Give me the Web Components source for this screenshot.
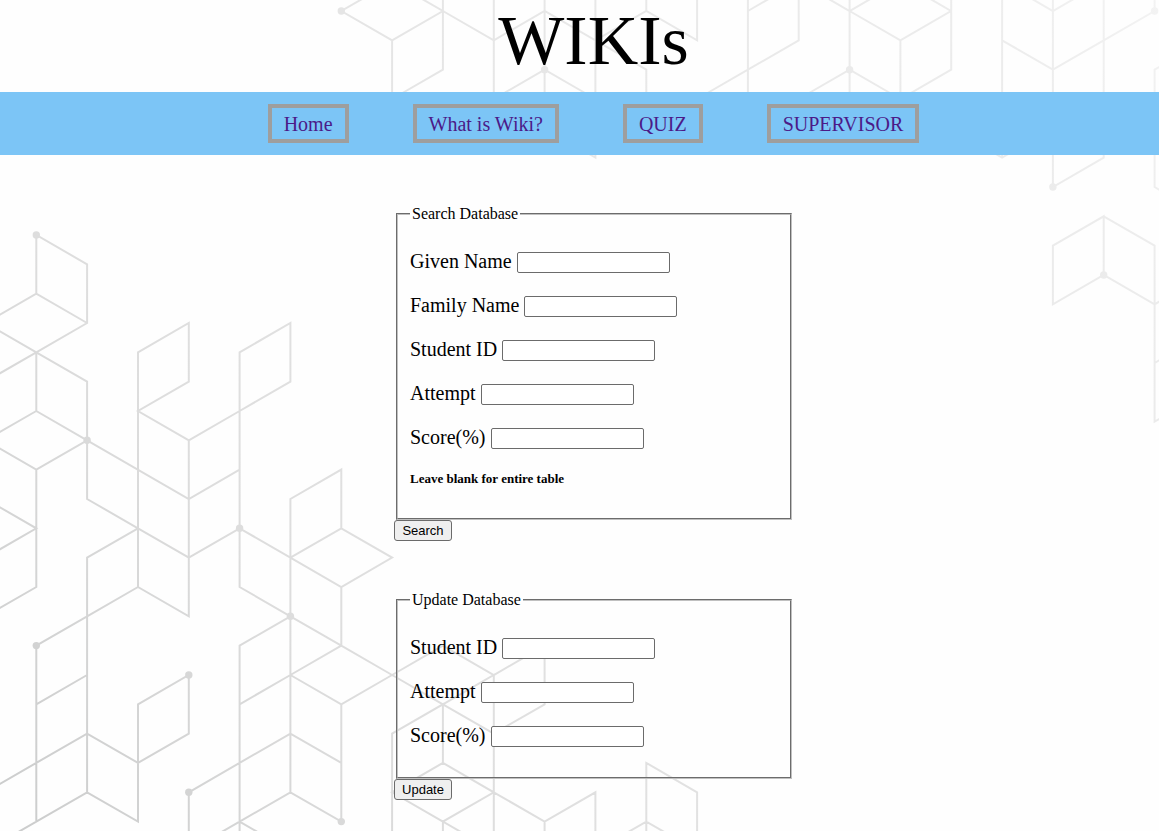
<!DOCTYPE html>
<html lang="en">
<head>
<meta charset="utf-8">
<title>WIKIs - Supervisor</title>
<style>
  body { margin: 0; background: #fefefe; font-family: "Liberation Serif", "Times New Roman", serif; color: #000; }
</style>
</head>
<body>
<wiki-page>
  <wiki-nav slot="nav">
    <nav-item href="#home">Home</nav-item>
    <nav-item href="#wiki">What is Wiki?</nav-item>
    <nav-item href="#quiz">QUIZ</nav-item>
    <nav-item href="#supervisor">SUPERVISOR</nav-item>
  </wiki-nav>
  <db-form legend="Search Database" action-label="Search">
    <field-row label="Given Name" name="given"></field-row>
    <field-row label="Family Name" name="family"></field-row>
    <field-row label="Student ID" name="id"></field-row>
    <field-row label="Attempt" name="attempt"></field-row>
    <field-row label="Score(%)" name="score"></field-row>
    <form-note>Leave blank for entire table</form-note>
  </db-form>
  <db-form legend="Update Database" action-label="Update">
    <field-row label="Student ID" name="id"></field-row>
    <field-row label="Attempt" name="attempt"></field-row>
    <field-row label="Score(%)" name="score"></field-row>
  </db-form>
</wiki-page>
<script>
class BaseElement extends HTMLElement {
  connectedCallback() {
    if (!this.shadowRoot) this.attachShadow({ mode: "open" }).innerHTML = this.render();
  }
}

/* Isometric line pattern. Each point is "column,row" on a triangular lattice. */
const LATTICE = {
  lower: { top: 235, dots: "0,0 1,7 4,10 0,14 5,13 3,15 3,19 6,20", lines: `
    0,2 0,0 1,1 1,3 0,4 -1,5|-1,3 0,2 1,3|-1,3 0,4 1,5 1,9 2,10 3,11 3,13 2,12 2,4 3,3 3,5 2,6 3,7 3,11
    0,4 0,6 1,7 3,9 4,8|-1,7 0,6|-1,7 0,8 1,7|0,8 0,12 -1,13|-1,9 0,10 -1,11
    3,7 4,6 5,5 5,3 4,4 4,12 5,13|3,11 4,10 5,11 6,12 7,11 6,10 5,11|5,19 5,9 6,8 6,10|6,12 6,14
    2,10 1,11 1,19|2,12 1,13 0,14 0,20|0,16 1,15|-1,19 0,18 1,17 2,18|-1,21 0,20 1,19 2,20 2,16 3,15 3,17 2,18
    3,22 3,19 4,18 5,17 6,18|5,13 4,14 4,22|5,13 6,14 7,15 8,16 9,17|4,16 5,15 6,14|5,15 6,16 7,15 8,14
    6,16 6,20 5,19 4,20 2,22|4,20 6,22|7,22 7,17 8,16 8,18 7,19 8,20 8,22|8,18 9,19 8,20 9,21
    8,14 9,15 10,14 10,16 9,17|8,16 9,15 9,22|9,19 10,20 11,19 11,22|10,20 10,22
    12,22 12,18 13,19 13,22|11,21 12,20 13,21` },
  upper: { top: 11, dots: "6,0 10,2 16,2 22,0 20,6 21,9", lines: `
    7,3 7,1 6,0 7,-1 8,0 7,1|8,-1 8,2 7,3|8,0 9,1 10,0 11,1 12,0 13,1 13,-1|9,-1 9,4|10,-1 10,4|9,3 10,2 11,3
    11,-1 11,5 10,4|12,-1 12,0|11,1 12,2 12,4|14,-1 14,4|14,0 15,-1 15,1 14,2 13,3|16,-1 16,4|15,-1 16,0 17,-1
    16,0 17,1 18,0 18,2 17,3 17,1|15,3 16,2 17,3|17,-1 18,0 18,-1|19,-1 19,5|18,4 19,5 20,4|19,-1 20,0 21,-1
    19,1 20,2 21,1 22,0 22,-1|20,-1 20,2|20,4 20,6 21,5 21,-1|23,1 22,2 22,6 23,7
    20,2 20,4|21,9 21,7 20,8 20,10 21,9 22,10 23,9|21,7 22,8 22,14 23,13|22,12 23,11` }
};

class CubePattern extends BaseElement {
  render() {
    const groups = Object.values(LATTICE).map(g => {
      const at = p => {
        const [c, r] = p.split(",").map(Number);
        return [(36.3 + c * 50.83).toFixed(1), (g.top + r * 29.33).toFixed(1)];
      };
      const d = g.lines.trim().split(/\||\n/).map(l => "M" + l.trim().split(/\s+/).map(at).join("L")).join("");
      const dots = g.dots.split(" ").map(at).map(([x, y]) => `<circle cx="${x}" cy="${y}" r="3.7" fill="url(#fade)"/>`).join("");
      return `<path d="${d}" fill="none" stroke="url(#fade)" stroke-width="2"/>${dots}`;
    }).join("");
    return `<style>
      :host { position: absolute; inset: 0; overflow: hidden; z-index: -1; }
      svg { display: block; width: 100%; height: 100%; }
    </style>
    <svg aria-hidden="true"><defs>
      <linearGradient id="fade" gradientUnits="userSpaceOnUse" x1="0" y1="831" x2="1159" y2="0">
        <stop offset="0" stop-color="#cbcccc"/><stop offset=".26" stop-color="#dddddd"/>
        <stop offset=".53" stop-color="#e5e5e5"/><stop offset=".88" stop-color="#ececec"/>
        <stop offset="1" stop-color="#f3f3f3"/>
      </linearGradient></defs>${groups}</svg>`;
  }
}

class WikiPage extends BaseElement {
  render() {
    return `<style>
      :host { display: block; position: relative; z-index: 0; min-height: 100vh; }
      h1 { margin: 0; padding-left: 28px; height: 92px; font-size: 70px; line-height: 82px; font-weight: 400; text-align: center; }
      main { display: flex; flex-direction: column; align-items: center; gap: 50px; padding: 50px 0 30px 29px; }
    </style>
    <cube-pattern></cube-pattern>
    <header><h1>WIKIs</h1><slot name="nav"></slot></header>
    <main><slot></slot></main>`;
  }
}

class WikiNav extends BaseElement {
  render() {
    return `<style>
      :host { display: block; background: #7cc5f6; }
      nav { display: flex; justify-content: center; gap: 64px; padding: 12px 0 12px 28px; }
    </style><nav><slot></slot></nav>`;
  }
}

class NavItem extends BaseElement {
  render() {
    return `<style>
      :host { display: block; }
      a { display: block; border: 4px solid #9e9e9e; padding: 5px 12px 3px; font-size: 20px; line-height: 23px; color: #4b1a88; text-decoration: none; white-space: nowrap; }
    </style><a href="${this.getAttribute("href")}"><slot></slot></a>`;
  }
}

class DbForm extends BaseElement {
  render() {
    return `<style>
      :host { display: block; width: 400px; max-width: 100%; }
      form { display: flex; flex-direction: column; align-items: flex-start; }
      fieldset { align-self: stretch; min-width: 0; margin: 0 2px; border: 2px groove #c0c0c0; padding: 25px 12px 31px; }
      legend { padding: 0 2px; font-size: 16px; line-height: 18px; }
      .rows { display: flex; flex-direction: column; gap: 20px; }
      button { box-sizing: border-box; width: 58px; height: 21px; padding: 0; border: 1px solid #6b6b6b; border-radius: 3px; background: #efefef; color: #000; font: 13px/19px "Liberation Sans", Arial, sans-serif; }
    </style>
    <form><fieldset><legend>${this.getAttribute("legend")}</legend><div class="rows"><slot></slot></div></fieldset>
    <button type="button">${this.getAttribute("action-label")}</button></form>`;
  }
}

class FieldRow extends BaseElement {
  render() {
    return `<style>
      :host { display: flex; align-items: center; gap: 5px; height: 24px; font-size: 20px; line-height: 24px; }
      label { padding-top: 2px; }
      input { box-sizing: border-box; width: 153px; height: 21px; margin: 4px 0 0; padding: 1px 2px; border: 1px solid #6b6b6b; border-radius: 2px; background: #fff; font: 13px "Liberation Sans", Arial, sans-serif; }
    </style>
    <label for="field">${this.getAttribute("label")}</label><input id="field" type="text" name="${this.getAttribute("name")}">`;
  }
}

class FormNote extends BaseElement {
  render() {
    return `<style>
      :host { display: block; padding-top: 3px; font-size: 13px; line-height: 16px; font-weight: 700; }
    </style><slot></slot>`;
  }
}

customElements.define("cube-pattern", CubePattern);
customElements.define("nav-item", NavItem);
customElements.define("wiki-nav", WikiNav);
customElements.define("field-row", FieldRow);
customElements.define("form-note", FormNote);
customElements.define("db-form", DbForm);
customElements.define("wiki-page", WikiPage);
</script>
</body>
</html>
